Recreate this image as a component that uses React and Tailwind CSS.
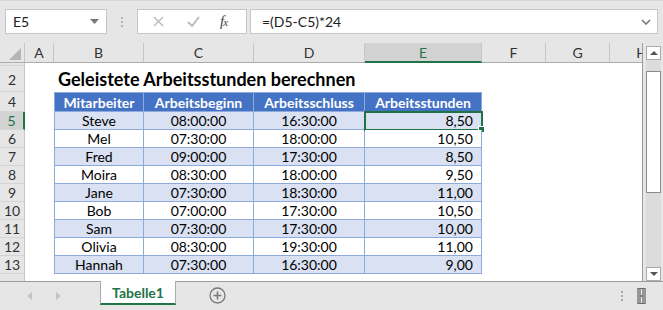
import React from "react";

const cols = [
  { key: "A", w: "w-[29px]" },
  { key: "B", w: "w-[90px]" },
  { key: "C", w: "w-[110px]" },
  { key: "D", w: "w-[111px]" },
  { key: "E", w: "w-[117px]" },
  { key: "F", w: "w-[64px]" },
  { key: "G", w: "w-[64px]" },
  { key: "H", w: "w-[64px]" },
];

const rows = [
  { n: 5, name: "Steve", start: "08:00:00", end: "16:30:00", hours: "8,50" },
  { n: 6, name: "Mel", start: "07:30:00", end: "18:00:00", hours: "10,50" },
  { n: 7, name: "Fred", start: "09:00:00", end: "17:30:00", hours: "8,50" },
  { n: 8, name: "Moira", start: "08:30:00", end: "18:00:00", hours: "9,50" },
  { n: 9, name: "Jane", start: "07:30:00", end: "18:30:00", hours: "11,00" },
  { n: 10, name: "Bob", start: "07:00:00", end: "17:30:00", hours: "10,50" },
  { n: 11, name: "Sam", start: "07:30:00", end: "17:30:00", hours: "10,00" },
  { n: 12, name: "Olivia", start: "08:30:00", end: "19:30:00", hours: "11,00" },
  { n: 13, name: "Hannah", start: "07:30:00", end: "16:30:00", hours: "9,00" },
];

const RowHead = ({ label, active, className = "" }) => (
  <div
    className={
      "w-[25px] shrink-0 flex justify-center border-b border-[#d4d4d4] " +
      (active
        ? "bg-[#d2d2d2] text-[#217346] border-r-2 border-r-[#217346] "
        : "bg-[#e6e6e6] text-[#333] border-r border-r-[#c6c6c6] ") +
      className
    }
  >
    {label}
  </div>
);

const TableRow = ({ r }) => {
  const band = r.n % 2 === 1 ? "bg-[#d9e1f2]" : "bg-white";
  const cell = "h-full flex items-center border-r border-b border-[#8ea9db] " + band;
  return (
    <div className="flex h-[18px] text-[14px] text-black">
      <RowHead label={r.n} active={r.n === 5} className="items-center" />
      <div className="w-[29px] shrink-0 bg-white" />
      <div className={"w-[90px] shrink-0 justify-center border-l " + cell}>{r.name}</div>
      <div className={"w-[110px] shrink-0 justify-center " + cell}>{r.start}</div>
      <div className={"w-[111px] shrink-0 justify-center " + cell}>{r.end}</div>
      <div className={"w-[117px] shrink-0 justify-end pr-[8px] relative " + cell}>
        {r.hours}
        {r.n === 5 && (
          <>
            <div className="absolute -top-[1px] -left-[1px] -right-[2px] -bottom-[2px] border-2 border-[#217346]" />
            <div className="absolute -right-[4px] -bottom-[4px] w-[7px] h-[7px] bg-[#217346] border border-white" />
          </>
        )}
      </div>
      <div className="flex-1 bg-white" />
    </div>
  );
};

export default function App() {
  return (
    <div className="w-[663px] h-[310px] bg-[#e6e6e6] flex flex-col overflow-hidden font-['Lato','Liberation_Sans',sans-serif] text-[#222]">
      {/* formula bar */}
      <div className="h-[43px] shrink-0 flex items-start pt-[8px] pl-[5px] pr-[5px] border-t border-[#d8d8d8]">
        <div className="w-[102px] h-[25px] bg-white border border-[#c6c6c6] flex items-center pl-[7px] pr-[7px] text-[14px]">
          <span className="flex-1">E5</span>
          <svg width="9" height="5" viewBox="0 0 9 5">
            <path d="M0 0 L9 0 L4.5 5 Z" fill="#777" />
          </svg>
        </div>
        <div className="w-[30px] h-[25px] flex flex-col items-center justify-center gap-[2px]">
          <div className="w-[2px] h-[2px] bg-[#b5b5b5]" />
          <div className="w-[2px] h-[2px] bg-[#b5b5b5]" />
          <div className="w-[2px] h-[2px] bg-[#b5b5b5]" />
        </div>
        <div className="w-[110px] h-[25px] bg-white border border-[#c6c6c6] flex items-center">
          <svg width="11" height="11" viewBox="0 0 11 11" className="ml-[15px]">
            <path d="M1 1 L10 10 M10 1 L1 10" stroke="#b9b9b9" strokeWidth="1.4" />
          </svg>
          <svg width="13" height="11" viewBox="0 0 13 11" className="ml-[23px]">
            <path d="M1 6 L5 10 L12 1" stroke="#b9b9b9" strokeWidth="1.8" fill="none" />
          </svg>
          <span className="ml-[20px] font-['Liberation_Serif',serif] italic text-[15px] text-[#444] tracking-[-1px]">
            f<span className="text-[11px]">x</span>
          </span>
        </div>
        <div className="ml-[3px] flex-1 h-[25px] bg-white border border-[#c6c6c6] flex items-center pl-[11px] pr-[6px] text-[14px]">
          <span className="flex-1">=(D5-C5)*24</span>
          <svg width="10" height="6" viewBox="0 0 10 6">
            <path d="M1 1 L5 5 L9 1" stroke="#777" strokeWidth="1.6" fill="none" />
          </svg>
        </div>
      </div>

      {/* sheet + scrollbar */}
      <div className="flex h-[238px] shrink-0">
        <div className="w-[643px] shrink-0 flex flex-col overflow-hidden border-r border-[#9c9c9c]">
          {/* column headers */}
          <div className="flex h-[20px] shrink-0 border-b border-[#ababab] text-[14px] text-[#333]">
            <div className="w-[25px] shrink-0 relative border-r border-[#c6c6c6]">
              <svg width="12" height="12" viewBox="0 0 12 12" className="absolute right-[3px] bottom-[2px]">
                <path d="M12 0 L12 12 L0 12 Z" fill="#b4b4b4" />
              </svg>
            </div>
            {cols.map((c) =>
              c.key === "E" ? (
                <div
                  key={c.key}
                  className={c.w + " shrink-0 flex items-center justify-center bg-[#d2d2d2] text-[#217346] border-r border-[#c6c6c6] border-b-2 border-b-[#217346] -mb-[1px]"}
                >
                  {c.key}
                </div>
              ) : (
                <div key={c.key} className={c.w + " shrink-0 flex items-center justify-center border-r border-[#c6c6c6]"}>
                  {c.key}
                </div>
              )
            )}
          </div>

          {/* row 1 (tiny) */}
          <div className="flex h-[3px] shrink-0">
            <RowHead label="" />
            <div className="flex-1 bg-white" />
          </div>

          {/* row 2 title */}
          <div className="flex h-[26px] shrink-0">
            <RowHead label="2" className="items-end pb-[1px] text-[14px]" />
            <div className="w-[29px] shrink-0 bg-white" />
            <div className="flex-1 bg-white flex items-end pl-[4px] pb-[2px]">
              <span className="font-bold text-[18px] text-black whitespace-nowrap leading-[22px]">
                Geleistete Arbeitsstunden berechnen
              </span>
            </div>
          </div>

          {/* row 4 header */}
          <div className="flex h-[20px] shrink-0 text-[14px]">
            <RowHead label="4" className="items-center" />
            <div className="w-[29px] shrink-0 bg-white" />
            {["Mitarbeiter", "Arbeitsbeginn", "Arbeitsschluss", "Arbeitsstunden"].map((h, i) => (
              <div
                key={h}
                className={
                  ["w-[90px] border-l", "w-[110px]", "w-[111px]", "w-[117px]"][i] +
                  " shrink-0 flex items-center justify-center bg-[#4472c4] text-white font-bold border-r border-t border-b border-[#8ea9db]"
                }
              >
                {h}
              </div>
            ))}
            <div className="flex-1 bg-white" />
          </div>

          {rows.map((r) => (
            <TableRow key={r.n} r={r} />
          ))}

          {/* row 14 partial */}
          <div className="flex flex-1 text-[14px]">
            <RowHead label="14" className="items-start pt-[2px]" />
            <div className="flex-1 bg-white" />
          </div>
        </div>

        {/* vertical scrollbar */}
        <div className="flex-1 flex flex-col pl-[3px] pr-[2px] pt-[3px]">
          <div className="h-[14px] bg-white border border-[#ababab] flex items-center justify-center shrink-0">
            <svg width="8" height="4" viewBox="0 0 8 4">
              <path d="M0 4 L4 0 L8 4 Z" fill="#555" />
            </svg>
          </div>
          <div className="flex-1 bg-[#dcdcdc] flex flex-col pt-[11px]">
            <div className="h-[122px] bg-white border border-[#8a8a8a]" />
          </div>
          <div className="h-[14px] bg-white border border-[#ababab] flex items-center justify-center shrink-0">
            <svg width="8" height="4" viewBox="0 0 8 4">
              <path d="M0 0 L8 0 L4 4 Z" fill="#555" />
            </svg>
          </div>
        </div>
      </div>

      {/* sheet tabs */}
      <div className="flex-1 flex border-t border-[#9c9c9c] relative">
        <div className="w-[100px] shrink-0 flex items-center pl-[27px] gap-[24px]">
          <svg width="5" height="8" viewBox="0 0 5 8">
            <path d="M5 0 L0 4 L5 8 Z" fill="#c4c4c4" />
          </svg>
          <svg width="5" height="8" viewBox="0 0 5 8">
            <path d="M0 0 L5 4 L0 8 Z" fill="#c4c4c4" />
          </svg>
        </div>
        <div className="w-[76px] h-[24px] -mt-[1px] shrink-0 bg-white border-l border-r border-[#ababab] border-b-2 border-b-[#217346] flex items-center justify-center font-bold text-[14px] text-[#217346]">
          Tabelle1
        </div>
        <div className="ml-[33px] flex items-center h-[27px]">
          <svg width="17" height="17" viewBox="0 0 17 17">
            <circle cx="8.5" cy="8.5" r="7.5" fill="none" stroke="#7a7a7a" strokeWidth="1.3" />
            <path d="M8.5 4.5 V12.5 M4.5 8.5 H12.5" stroke="#7a7a7a" strokeWidth="1.6" />
          </svg>
        </div>
        <div className="flex-1" />
        <div className="flex flex-col justify-center gap-[2px] h-[27px] mr-[14px]">
          <div className="w-[2px] h-[2px] bg-[#a6a6a6]" />
          <div className="w-[2px] h-[2px] bg-[#a6a6a6]" />
          <div className="w-[2px] h-[2px] bg-[#a6a6a6]" />
        </div>
        <div className="flex items-center h-[27px] mr-[17px]">
          <svg width="9" height="16" viewBox="0 0 9 16">
            <path d="M1 0 V16 M3 0 V16 M6 0 V16 M8 0 V16 M3 8 H6" stroke="#6b6b6b" strokeWidth="1.3" />
            <path d="M1 0.5 H8 M1 15.5 H8" stroke="#6b6b6b" strokeWidth="1" />
          </svg>
        </div>
      </div>
    </div>
  );
}
